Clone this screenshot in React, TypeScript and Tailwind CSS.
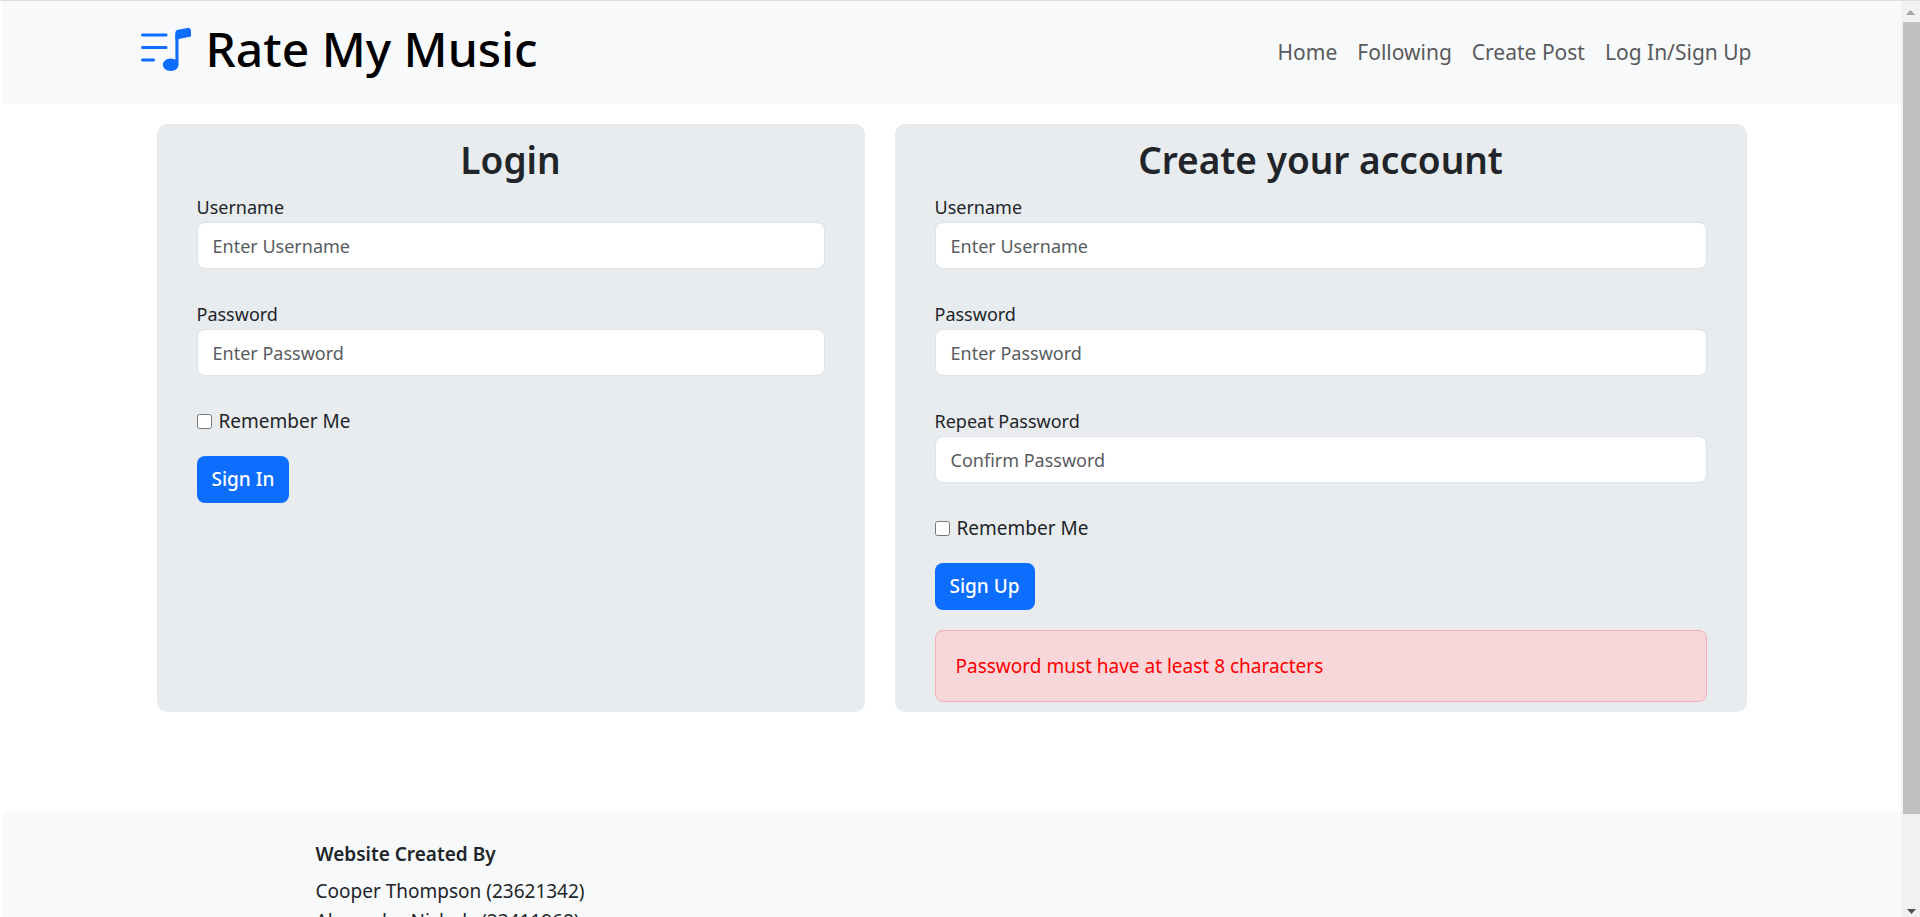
import { useId, type ReactNode } from "react";

const navLinks = ["Home", "Following", "Create Post", "Log In/Sign Up"];
const authors = ["Cooper Thompson (23621342)", "Alexander Nichols (23411968)"];

function MusicLogo() {
  return (
    <svg viewBox="0 0 16 16" className="size-[50px]" fill="#0d6efd" aria-hidden="true">
      <path d="M12 13c0 1.105-1.12 2-2.5 2S7 14.105 7 13s1.12-2 2.5-2 2.500.895 2.500 2" />
      <path fillRule="evenodd" d="M12 3v10h-1V3z" />
      <path d="M11 2.820a1 1 0 0 1 .804-.980l3-.600A1 1 0 0 1 16 2.220V4l-5 1z" />
      <path fillRule="evenodd" d="M0 11.500a.5.5 0 0 1 .5-.5H4a.5.5 0 0 1 0 1H.5a.5.5 0 0 1-.5-.5m0-4A.5.5 0 0 1 .5 7H8a.5.5 0 0 1 0 1H.5a.5.5 0 0 1-.5-.5m0-4A.5.5 0 0 1 .5 3H8a.5.5 0 0 1 0 1H.5a.5.5 0 0 1-.5-.5" />
    </svg>
  );
}

function Field({ label, placeholder, type = "text" }: { label: string; placeholder: string; type?: string }) {
  const id = useId();
  return (
    <div className="mb-[30px] flex flex-col text-[18px]">
      <label htmlFor={id} className="h-[30px] leading-[30px]">
        {label}
      </label>
      <input
        id={id}
        type={type}
        placeholder={placeholder}
        className="h-[47px] w-full rounded-lg border border-[#dee2e6] bg-white px-[15px] placeholder:text-[#595c5f]"
      />
    </div>
  );
}

function AuthCard({ title, action, children, alert }: { title: string; action: string; children: ReactNode; alert?: string }) {
  return (
    <section className="rounded-[10px] bg-[#e9ecef] px-10 pt-3 pb-[10px]">
      <h2 className="mb-2 text-center text-[37px] leading-[48px] font-semibold">{title}</h2>
      <form>
        {children}
        <label className="flex h-[30px] items-center gap-[7px]">
          <input type="checkbox" className="size-[15px]" />
          Remember Me
        </label>
        <button type="button" className="mt-5 block h-[47px] rounded-lg bg-[#0d6efd] px-[15px] font-medium text-white">
          {action}
        </button>
      </form>
      {alert && (
        <p role="alert" className="mt-5 rounded-lg border border-[#f1aeb5] bg-[#f8d7da] px-5 py-5 leading-[30px] text-[#ff0000]">
          {alert}
        </p>
      )}
    </section>
  );
}

export default function App() {
  return (
    <div className="flex h-screen overflow-hidden border-t border-[#dfdfda] bg-white font-['Noto_Sans','Open_Sans',sans-serif] text-[19px] text-[#212529]">
      <div className="min-w-0 flex-1 overflow-hidden border-l-2 border-white">
        <header className="bg-[#f8f9fa]">
          <div className="mx-auto flex h-[103px] max-w-[1622px] items-center justify-between">
            <a href="#" className="flex items-center gap-[15px] pb-2 text-[48px] leading-[60px] font-medium text-black">
              <MusicLogo />
              Rate My Music
            </a>
            <nav className="flex gap-5 pr-[11px] text-[21px] text-[#595a5c]">
              {navLinks.map((link) => (
                <a key={link} href="#">
                  {link}
                </a>
              ))}
            </nav>
          </div>
        </header>

        <main className="mx-auto mt-5 mb-[100px] grid max-w-[1590px] grid-cols-[708fr_852fr] gap-[30px]">
          <AuthCard title="Login" action="Sign In">
            <Field label="Username" placeholder="Enter Username" />
            <Field label="Password" placeholder="Enter Password" type="password" />
          </AuthCard>
          <AuthCard title="Create your account" action="Sign Up" alert="Password must have at least 8 characters">
            <Field label="Username" placeholder="Enter Username" />
            <Field label="Password" placeholder="Enter Password" type="password" />
            <Field label="Repeat Password" placeholder="Confirm Password" type="password" />
          </AuthCard>
        </main>

        <footer className="bg-[#f8f9fa] pt-[30px] pb-10">
          <div className="mx-auto max-w-[1272px]">
            <h3 className="mb-[10px] leading-6 font-semibold">Website Created By</h3>
            <ul>
              {authors.map((name) => (
                <li key={name} className="leading-[30px]">
                  {name}
                </li>
              ))}
            </ul>
          </div>
        </footer>
      </div>

      <div aria-hidden="true" className="flex w-[19px] flex-col bg-[#f1f1f1] pl-[2px]">
        <svg viewBox="0 0 17 21" className="h-[21px] w-[17px]" fill="#a3a3a3">
          <path d="M3 14h9L7.500 9z" />
        </svg>
        <div className="h-[792px] bg-[#c1c1c1]" />
        <svg viewBox="0 0 17 21" className="mt-auto h-[21px] w-[17px]" fill="#505050">
          <path d="M4 13h9l-4.500 5z" />
        </svg>
      </div>
    </div>
  );
}
